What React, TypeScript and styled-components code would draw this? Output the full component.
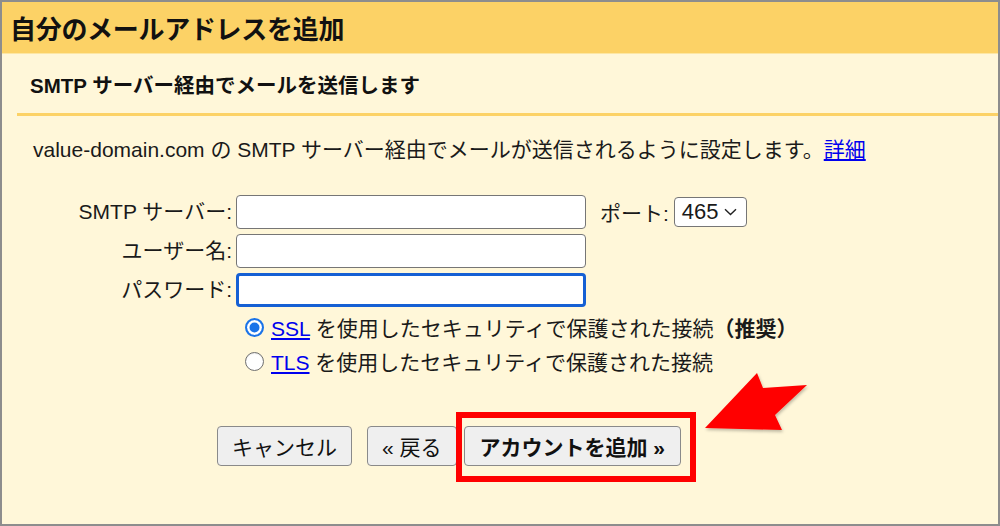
import React from "react";
import styled, { createGlobalStyle } from "styled-components";

const GlobalStyle = createGlobalStyle`
  html, body { margin: 0; padding: 0; }
  body {
    font-family: "Liberation Sans", "Noto Sans CJK JP", sans-serif;
    color: #1a1a1a;
    background: #fff7d9;
  }
  * { box-sizing: border-box; }
`;

const Frame = styled.div`
  position: relative;
  width: 1000px;
  height: 526px;
  border: 2px solid #8d8d8d;
  background: #fff7d9;
  overflow: hidden;
`;

const Header = styled.div`
  height: 52px;
  background: #fcd266;
  border-bottom: 1px solid #fde7a4;
  display: flex;
  align-items: center;
  padding-left: 8px;
  font-size: 26px;
  font-weight: 700;
  color: #111;
  letter-spacing: -0.3px;
`;

const SubHeader = styled.div`
  height: 59px;
  display: flex;
  align-items: center;
  padding-left: 28px;
  font-size: 20.5px;
  font-weight: 700;
  color: #111;
`;

const Divider = styled.div`
  height: 3px;
  margin-left: 15px;
  background: #fcd266;
`;

const Description = styled.p`
  margin: 19px 0 0 0;
  padding-left: 31px;
  font-size: 21px;
  line-height: 30px;
  white-space: nowrap;
`;

const Link = styled.a`
  color: #0000ee;
  text-decoration: underline;
  text-underline-offset: 2px;
  cursor: pointer;
`;

const Form = styled.div`
  margin-top: 30px;
  display: grid;
  grid-template-columns: 230px 350px auto;
  column-gap: 4px;
  row-gap: 5px;
  align-items: center;
`;

const Label = styled.label`
  font-size: 21px;
  line-height: 34px;
  text-align: right;
  white-space: nowrap;
`;

const Input = styled.div<{ $focused?: boolean }>`
  height: 34px;
  background: #fff;
  border: ${(p) => (p.$focused ? "3px solid #1560d4" : "1.5px solid #767676")};
  border-radius: 4px;
`;

const PortGroup = styled.div`
  display: flex;
  align-items: center;
  gap: 5px;
  padding-left: 10px;
  font-size: 21px;
`;

const Select = styled.div`
  width: 73px;
  height: 30px;
  display: flex;
  align-items: center;
  justify-content: space-between;
  padding: 0 9px 0 7px;
  background: #fff;
  border: 1.5px solid #767676;
  border-radius: 4px;
  font-size: 22px;
`;

const Radios = styled.div`
  margin-top: 3px;
  padding-left: 243px;
  display: flex;
  flex-direction: column;
`;

const RadioRow = styled.div`
  height: 34px;
  display: flex;
  align-items: center;
  gap: 7px;
  font-size: 21px;
  white-space: nowrap;
`;

const RadioDot = styled.span<{ $checked?: boolean }>`
  width: 19px;
  height: 19px;
  border-radius: 50%;
  flex: none;
  background: #fff;
  border: ${(p) => (p.$checked ? "2px solid #1a73e8" : "1.5px solid #6f6f6f")};
  box-shadow: ${(p) => (p.$checked ? "inset 0 0 0 2.5px #fff, inset 0 0 0 10px #1a73e8" : "inset 0 1px 1px rgba(0,0,0,0.08)")};
`;

const Strong = styled.span`
  font-weight: 700;
`;

const Buttons = styled.div`
  margin-top: 48px;
  padding-left: 215px;
  display: flex;
  align-items: center;
`;

const Button = styled.button<{ $primary?: boolean; $gap?: number }>`
  position: relative;
  height: 40px;
  margin-left: ${(p) => p.$gap ?? 0}px;
  padding: 0 ${(p) => (p.$primary ? 15 : 14)}px;
  background: #efefef;
  border: 1.5px solid #8a8a8a;
  border-radius: 4px;
  font-family: "Liberation Sans", "Noto Sans CJK JP", sans-serif;
  font-size: 21px;
  font-weight: ${(p) => (p.$primary ? 700 : 400)};
  color: #111;
  white-space: nowrap;
`;

const Highlight = styled.span`
  position: absolute;
  left: -9px;
  top: -15px;
  right: -16px;
  bottom: -17px;
  border: 6px solid #ff0000;
  pointer-events: none;
`;

const Arrow = styled.svg`
  position: absolute;
  left: 693px;
  top: 361px;
  width: 125px;
  height: 80px;
  overflow: visible;
`;

export default function App() {
  return (
    <>
      <GlobalStyle />
      <Frame>
        <Header>自分のメールアドレスを追加</Header>
        <SubHeader>SMTP サーバー経由でメールを送信します</SubHeader>
        <Divider />
        <Description>
          value-domain.com の SMTP サーバー経由でメールが送信されるように設定します。<Link>詳細</Link>
        </Description>
        <Form>
          <Label>SMTP サーバー:</Label>
          <Input />
          <PortGroup>
            <span>ポート:</span>
            <Select>
              <span>465</span>
              <svg width="13" height="8" viewBox="0 0 13 8">
                <path d="M1 1.2 L6.5 6.5 L12 1.2" fill="none" stroke="#222" strokeWidth="1.4" />
              </svg>
            </Select>
          </PortGroup>
          <Label>ユーザー名:</Label>
          <Input />
          <span />
          <Label>パスワード:</Label>
          <Input $focused />
          <span />
        </Form>
        <Radios>
          <RadioRow>
            <RadioDot $checked />
            <span>
              <Link>SSL</Link> を使用したセキュリティで保護された接続<Strong>（推奨）</Strong>
            </span>
          </RadioRow>
          <RadioRow>
            <RadioDot />
            <span>
              <Link>TLS</Link> を使用したセキュリティで保護された接続
            </span>
          </RadioRow>
        </Radios>
        <Buttons>
          <Button>キャンセル</Button>
          <Button $gap={15}>« 戻る</Button>
          <Button $primary $gap={7}>
            アカウントを追加 »
            <Highlight />
          </Button>
        </Buttons>
        <Arrow viewBox="0 0 125 80">
          <defs>
            <filter id="sh" x="-20%" y="-20%" width="140%" height="140%">
              <feDropShadow dx="1" dy="2" stdDeviation="1.5" floodColor="#000" floodOpacity="0.25" />
            </filter>
          </defs>
          <polygon
            points="10,65 62,10 68,25 112,22 80,52 87,67"
            fill="#ff0000"
            filter="url(#sh)"
          />
        </Arrow>
      </Frame>
    </>
  );
}
